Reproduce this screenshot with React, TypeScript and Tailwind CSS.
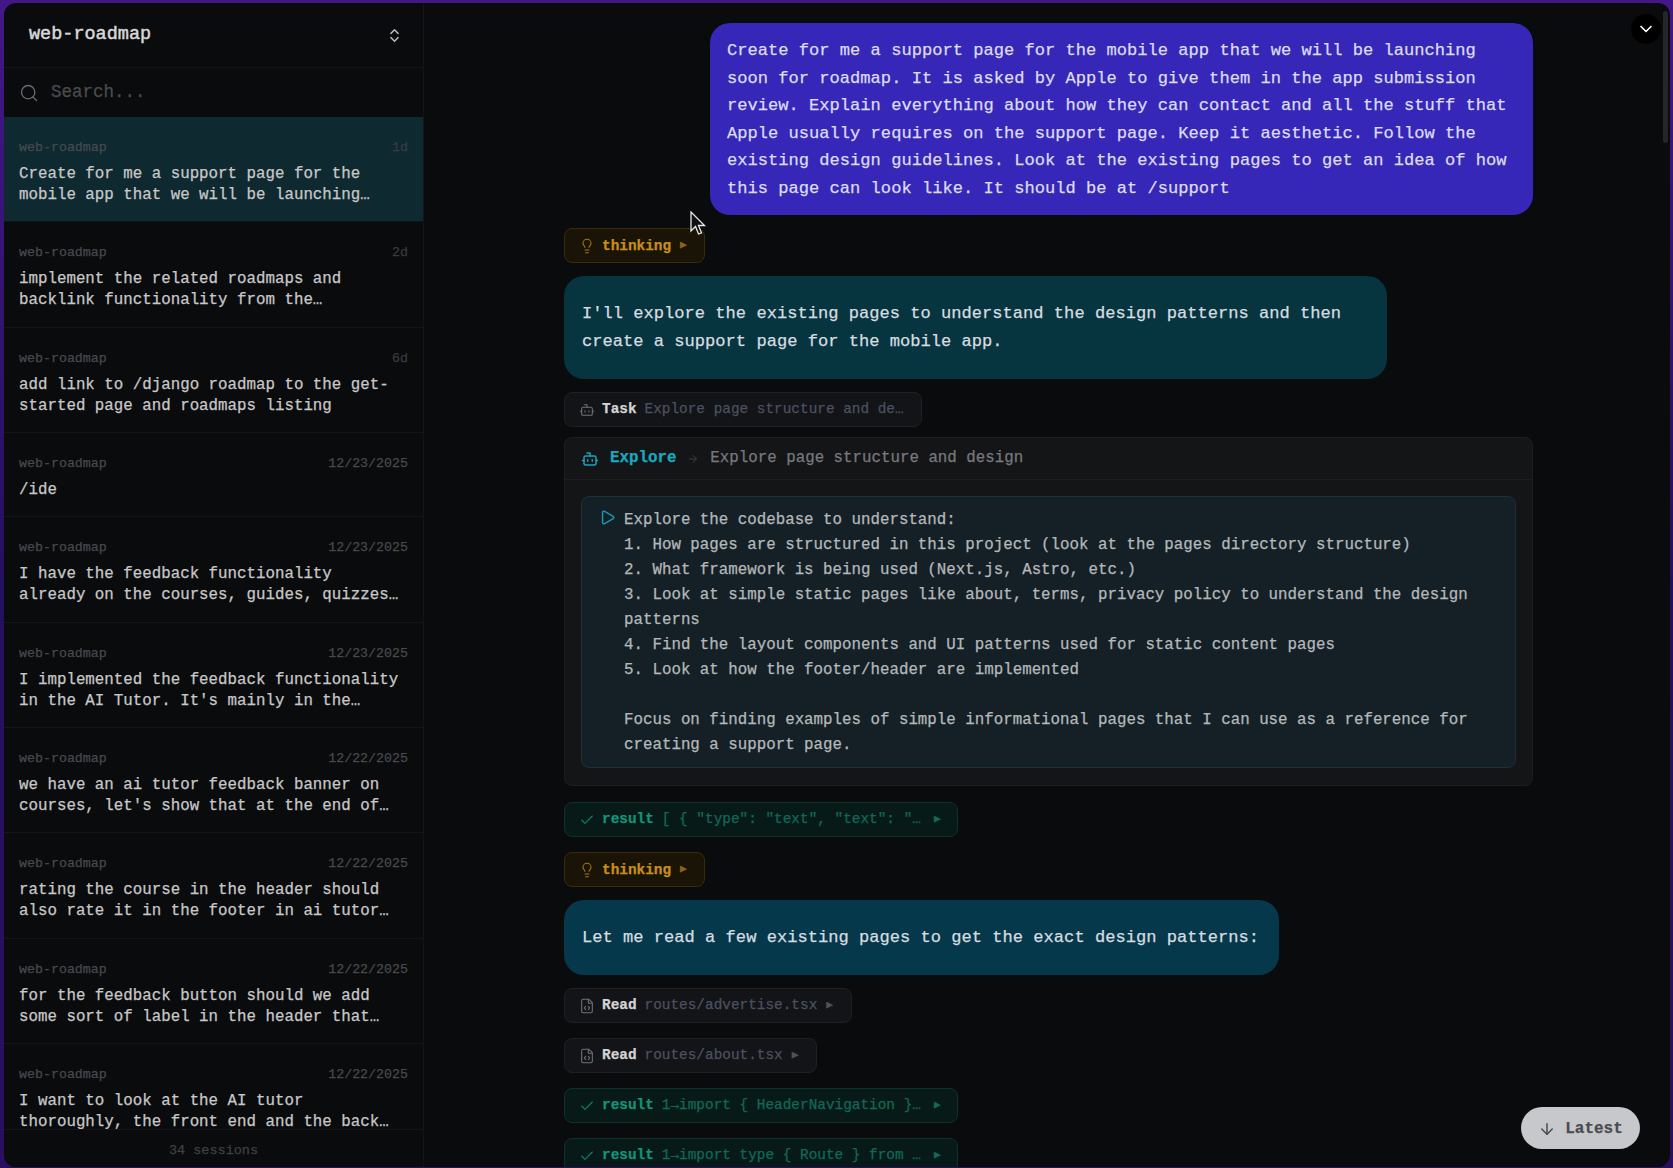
import React from "react";
import { Bot, Check, ChevronDown, ChevronsUpDown, Lightbulb, Search, ArrowDown, FileCode, ArrowRight, Play } from "lucide-react";

const sessions = [
  { t: "1d", a: "Create for me a support page for the", b: "mobile app that we will be launching…", on: true },
  { t: "2d", a: "implement the related roadmaps and", b: "backlink functionality from the…" },
  { t: "6d", a: "add link to /django roadmap to the get-", b: "started page and roadmaps listing" },
  { t: "12/23/2025", a: "/ide", b: "", short: true },
  { t: "12/23/2025", a: "I have the feedback functionality", b: "already on the courses, guides, quizzes…" },
  { t: "12/23/2025", a: "I implemented the feedback functionality", b: "in the AI Tutor. It's mainly in the…" },
  { t: "12/22/2025", a: "we have an ai tutor feedback banner on", b: "courses, let's show that at the end of…" },
  { t: "12/22/2025", a: "rating the course in the header should", b: "also rate it in the footer in ai tutor…" },
  { t: "12/22/2025", a: "for the feedback button should we add", b: "some sort of label in the header that…" },
  { t: "12/22/2025", a: "I want to look at the AI tutor", b: "thoroughly, the front end and the back…" },
];

function Tri({ className }: { className: string }) {
  return <span className={`text-[11px] leading-none ${className}`}>▶</span>;
}

function Thinking({ className = "" }: { className?: string }) {
  return (
    <div className={`flex h-[35px] w-[141px] shrink-0 items-center gap-[7px] rounded-lg border border-[#3a2a0a] bg-[#1a1406] pl-[14px] text-[14.4px] font-bold text-[#c98f16] ${className}`}>
      <Lightbulb size={16} strokeWidth={1.6} className="shrink-0 text-[#a67a18]" />
      <span className="pt-[2px]">thinking</span>
      <Tri className="ml-[2px] text-[#8a6518]" />
    </div>
  );
}

function ToolChip({ icon, label, detail, width, tri = true, className = "" }: { icon: React.ReactNode; label: string; detail: string; width: string; tri?: boolean; className?: string }) {
  return (
    <div className={`flex h-[35px] shrink-0 items-center gap-[7px] rounded-lg border border-[#1f2023] bg-[#131417] pl-[14px] text-[14.4px] ${width} ${className}`}>
      {icon}
      <span className="pt-[1px] font-bold text-[#d4d4d4]">{label}</span>
      <span className="whitespace-nowrap pl-[1px] pt-[1px] text-[#4b5160]">{detail}</span>
      {tri && <Tri className="ml-[2px] text-[#4f5157]" />}
    </div>
  );
}

function Result({ detail, className }: { detail: string; className: string }) {
  return (
    <div className={`flex h-[35px] w-[394px] shrink-0 items-center gap-[7px] rounded-lg border border-[#0d312b] bg-[#081a18] pl-[14px] text-[14.4px] ${className}`}>
      <Check size={16} strokeWidth={1.6} className="shrink-0 text-[#12806a]" />
      <span className="pt-[1px] font-bold text-[#149478]">result</span>
      <span className="whitespace-nowrap pl-[1px] pt-[1px] text-[#0f6a58]">{detail}</span>
      <Tri className="ml-[6px] text-[#0f6a58]" />
    </div>
  );
}

export default function App() {
  return (
    <div className="h-[1168px] w-[1673px] overflow-hidden bg-gradient-to-b from-[#431788] via-[#241060] to-[#2a0f60] pb-[1px] pl-[4px] pr-[3px] pt-[3px] font-['Liberation_Mono',monospace] [-webkit-text-stroke:0.25px]">
      <div className="relative flex h-full overflow-hidden rounded-xl bg-[#0a0b0d]">
        <aside className="flex w-[420px] shrink-0 flex-col border-r border-[#141518]">
          <div className="flex h-[65px] shrink-0 items-center justify-between border-b border-[#141518] pl-[25px] pr-[20px] text-[18.5px] text-[#d8d8d8] [-webkit-text-stroke:0.5px]">
            <span>web-roadmap</span>
            <ChevronsUpDown size={17} className="text-[#b8b8b8]" />
          </div>
          <div className="flex h-[49px] shrink-0 items-center gap-[12px] pl-[15px] text-[17.5px] text-[#4a4c50]">
            <Search size={20} strokeWidth={1.6} className="text-[#6a6c70]" />
            <span>Search...</span>
          </div>
          <div className="flex-1 overflow-hidden">
            {sessions.map((s, i) => (
              <div
                key={i}
                className={`border-b border-[#131417] px-[15px] pt-[23px] ${s.short ? "h-[84px]" : "h-[105.4px]"} ${s.on ? "bg-[#0e2930]" : ""}`}
              >
                <div className="flex justify-between text-[13.3px] leading-[16px] text-[#47494e]">
                  <span>web-roadmap</span>
                  <span className={i < 3 ? "text-[#393b40]" : ""}>{s.t}</span>
                </div>
                <div className="mt-[8px] whitespace-nowrap text-[15.8px] leading-[21px] text-[#c8c8c8]">
                  <div>{s.a}</div>
                  {s.b && <div>{s.b}</div>}
                </div>
              </div>
            ))}
          </div>
          <div className="flex h-[38px] shrink-0 items-center justify-center border-t border-[#141518] bg-[#0a0b0d] pt-[6px] text-[13.5px] text-[#3f4145]">
            34 sessions
          </div>
        </aside>

        <main className="flex min-w-0 flex-1 flex-col items-start gap-[13px] overflow-hidden pl-[140px] pt-[20px]">
          <div className="ml-[146px] h-[192px] w-[823px] shrink-0 rounded-[20px] bg-[#3727b8] px-[17px] pb-[13px] pt-[14px] text-[17.1px] leading-[27.6px] text-[#dcdcf0]">
            Create for me a support page for the mobile app that we will be launching
            <br />
            soon for roadmap. It is asked by Apple to give them in the app submission
            <br />
            review. Explain everything about how they can contact and all the stuff that
            <br />
            Apple usually requires on the support page. Keep it aesthetic. Follow the
            <br />
            existing design guidelines. Look at the existing pages to get an idea of how
            <br />
            this page can look like. It should be at /support
          </div>
          <Thinking />
          <div className="flex h-[103px] w-[823px] shrink-0 items-center rounded-[20px] bg-[#06343f] px-[18px] text-[17.1px] leading-[27.7px] text-[#d6dde0]">
            <div>
              I'll explore the existing pages to understand the design patterns and then
              <br />
              create a support page for the mobile app.
            </div>
          </div>
          <ToolChip
            width="w-[358px]"
            tri={false}
            icon={<Bot size={16} strokeWidth={1.6} className="shrink-0 text-[#707276]" />}
            label="Task"
            detail="Explore page structure and de…"
          />
          <div className="-mt-[3px] w-[969px] shrink-0 rounded-lg border border-[#1d1e21] bg-[#141517]">
            <div className="flex h-[42px] items-center gap-[11px] border-b border-[#1d1e21] pl-[16px] text-[15.8px]">
              <Bot size={18} strokeWidth={2} className="shrink-0 text-[#19a3b8]" />
              <span className="font-bold text-[#1aa9c0]">Explore</span>
              <ArrowRight size={12} className="shrink-0 text-[#3d3f43]" />
              <span className="text-[#77797d]">Explore page structure and design</span>
            </div>
            <div className="px-[16px] pb-[17px] pt-[16px]">
              <div className="flex h-[272px] gap-[8px] rounded-lg border border-[#1a3238] bg-[#142026] pl-[17px] pt-[11px] text-[15.8px] leading-[25px] text-[#b4b8ba]">
                <Play size={17} strokeWidth={2} className="mt-[1px] shrink-0 text-[#1a9ab0]" />
                <div>
                  Explore the codebase to understand:
                  <br />
                  1. How pages are structured in this project (look at the pages directory structure)
                  <br />
                  2. What framework is being used (Next.js, Astro, etc.)
                  <br />
                  3. Look at simple static pages like about, terms, privacy policy to understand the design
                  <br />
                  patterns
                  <br />
                  4. Find the layout components and UI patterns used for static content pages
                  <br />
                  5. Look at how the footer/header are implemented
                  <br />
                  <br />
                  Focus on finding examples of simple informational pages that I can use as a reference for
                  <br />
                  creating a support page.
                </div>
              </div>
            </div>
          </div>
          <Result className="mt-[3px]" detail={'[ { "type": "text", "text": "…'} />
          <Thinking className="mt-[2px]" />
          <div className="flex h-[75px] w-[715px] shrink-0 items-center rounded-[20px] bg-[#05384a] px-[18px] pt-[1px] text-[17.1px] text-[#d6dde0]">
            Let me read a few existing pages to get the exact design patterns:
          </div>
          <ToolChip
            width="w-[288px]"
            icon={<FileCode size={16} strokeWidth={1.6} className="shrink-0 text-[#707276]" />}
            label="Read"
            detail="routes/advertise.tsx"
          />
          <ToolChip
            width="w-[253px]"
            className="mt-[2px]"
            icon={<FileCode size={16} strokeWidth={1.6} className="shrink-0 text-[#707276]" />}
            label="Read"
            detail="routes/about.tsx"
          />
          <Result className="mt-[2px]" detail={"1→import { HeaderNavigation }…"} />
          <Result className="mt-[2px]" detail={"1→import type { Route } from …"} />
        </main>

        <div className="absolute right-[9px] top-[11px] flex h-[30px] w-[30px] items-center justify-center rounded-full bg-black">
          <ChevronDown size={20} className="text-white" />
        </div>
        <div className="absolute right-[2px] top-[8px] h-[132px] w-[5px] rounded-full bg-[#24262a]" />
        <div className="absolute bottom-[18px] right-[30px] flex h-[42px] w-[119px] items-center justify-center gap-[9px] rounded-full bg-[#c6c8cb] pt-[1px] text-[16px] font-bold text-[#4a4c50]">
          <ArrowDown size={18} />
          Latest
        </div>
        <svg className="absolute left-[686px] top-[208px]" width="18" height="26" viewBox="0 0 18 26">
          <path d="M1 1 L1 20 L5.5 15.5 L8.5 23 L11.5 21.8 L8.5 14.5 L14.5 14.5 Z" fill="#111" stroke="#e8e8e8" strokeWidth="1.3" />
        </svg>
      </div>
    </div>
  );
}
